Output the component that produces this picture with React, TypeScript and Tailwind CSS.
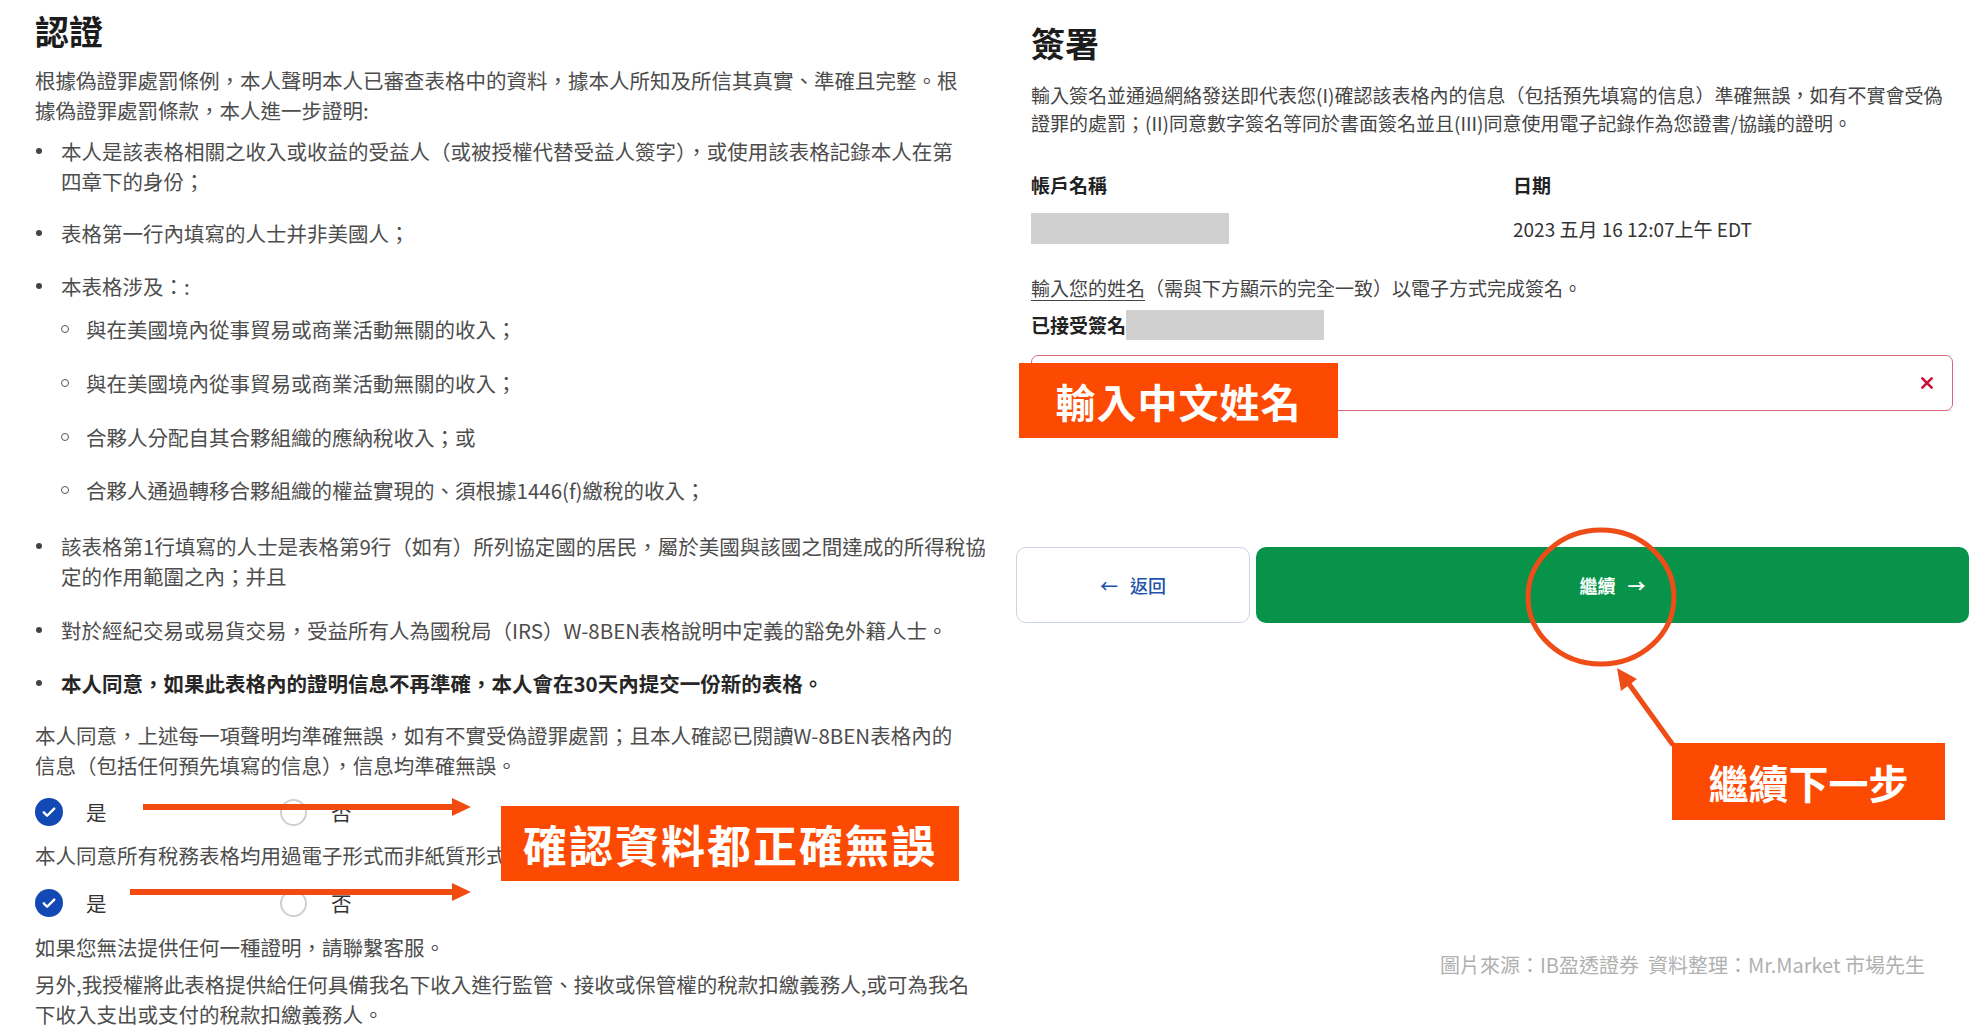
import { ReactNode } from 'react';

const CJK = "font-['Noto_Sans_CJK_TC','Noto_Sans',sans-serif]";

function Bullet({ children, className = '' }: { children: ReactNode; className?: string }) {
  return (
    <li className={`flex ${className}`}>
      <span className="flex h-[30px] w-[26px] shrink-0 items-center">
        <span className="ml-[1px] h-[6px] w-[6px] rounded-full bg-[#444]" />
      </span>
      <span className="flex-1">{children}</span>
    </li>
  );
}

function SubBullet({ children, className = '' }: { children: ReactNode; className?: string }) {
  return (
    <li className={`flex ${className}`}>
      <span className="flex h-[30px] w-[25px] shrink-0 items-center">
        <span className="h-[8px] w-[8px] rounded-full border-[1.5px] border-[#555]" />
      </span>
      <span className="flex-1">{children}</span>
    </li>
  );
}

function RadioRow() {
  return (
    <div className="flex h-[30px] items-center">
      <div className="flex w-[245px] items-center">
        <span className="flex h-[28px] w-[28px] items-center justify-center rounded-full bg-[#1249b5]">
          <svg width="18" height="18" viewBox="0 0 24 24" fill="none" stroke="white" strokeWidth="3.2" strokeLinecap="round" strokeLinejoin="round">
            <path d="M5 12.5l4.5 4.5L19 7.5" />
          </svg>
        </span>
        <span className="ml-[23px] text-[#333]">是</span>
      </div>
      <span className="h-[27px] w-[27px] rounded-full border-2 border-[#cfcfcf]" />
      <span className="ml-[24px] text-[#333]">否</span>
    </div>
  );
}

export default function App() {
  return (
    <div className={`relative flex h-[1028px] w-[1986px] overflow-hidden bg-white ${CJK}`}>
      {/* left: 認證 */}
      <div className="w-[1016px] shrink-0 pl-[35px] pr-[44px] pt-[9px] text-[20.5px] leading-[30px] text-[#4d4d4d]">
        <h1 className="text-[34px] font-bold leading-[44px] text-[#1c1c1c]">認證</h1>
        <p className="mt-[12px]">
          根據偽證罪處罰條例，本人聲明本人已審查表格中的資料，據本人所知及所信其真實、準確且完整。根據偽證罪處罰條款，本人進一步證明:
        </p>
        <ul className="mt-[11px]">
          <Bullet>本人是該表格相關之收入或收益的受益人（或被授權代替受益人簽字），或使用該表格記錄本人在第四章下的身份；</Bullet>
          <Bullet className="mt-[22px]">表格第一行內填寫的人士并非美國人；</Bullet>
          <Bullet className="mt-[23px]">
            本表格涉及：:
            <ul className="-ml-[26px] mt-[13px] pl-[26px]">
              <SubBullet>與在美國境內從事貿易或商業活動無關的收入；</SubBullet>
              <SubBullet className="mt-[24px]">與在美國境內從事貿易或商業活動無關的收入；</SubBullet>
              <SubBullet className="mt-[24px]">合夥人分配自其合夥組織的應納稅收入；或</SubBullet>
              <SubBullet className="mt-[23px]">合夥人通過轉移合夥組織的權益實現的、須根據1446(f)繳稅的收入；</SubBullet>
            </ul>
          </Bullet>
          <Bullet className="mr-[-18px] mt-[26px]">該表格第1行填寫的人士是表格第9行（如有）所列協定國的居民，屬於美國與該國之間達成的所得稅協定的作用範圍之內；并且</Bullet>
          <Bullet className="mt-[24px]">對於經紀交易或易貨交易，受益所有人為國稅局（IRS）W-8BEN表格說明中定義的豁免外籍人士。</Bullet>
          <Bullet className="mt-[23px]">
            <span className="font-semibold text-[#262626]">本人同意，如果此表格內的證明信息不再準確，本人會在30天內提交一份新的表格。</span>
          </Bullet>
        </ul>
        <p className="mt-[22px]">
          本人同意，上述每一項聲明均準確無誤，如有不實受偽證罪處罰；且本人確認已閱讀W-8BEN表格內的信息（包括任何預先填寫的信息），信息均準確無誤。
        </p>
        <div className="mt-[17px]">
          <RadioRow />
        </div>
        <p className="mt-[13px]">本人同意所有稅務表格均用過電子形式而非紙質形式提交。</p>
        <div className="mt-[18px]">
          <RadioRow />
        </div>
        <p className="mt-[14px]">如果您無法提供任何一種證明，請聯繫客服。</p>
        <p className="mt-[7px]">
          另外,我授權將此表格提供給任何具備我名下收入進行監管、接收或保管權的稅款扣繳義務人,或可為我名下收入支出或支付的稅款扣繳義務人。
        </p>
      </div>

      {/* right: 簽署 */}
      <div className="w-[970px] shrink-0 pl-[15px] pt-[21px] text-[19px] leading-[28px] text-[#444]">
        <h1 className="text-[34px] font-bold leading-[44px] text-[#1c1c1c]">簽署</h1>
        <p className="mt-[16px] w-[930px] leading-[28px]">
          輸入簽名並通過網絡發送即代表您(I)確認該表格內的信息（包括預先填寫的信息）準確無誤，如有不實會受偽證罪的處罰；(II)同意數字簽名等同於書面簽名並且(III)同意使用電子記錄作為您證書/協議的證明。
        </p>
        <div className="mt-[34px] grid grid-cols-[482px_1fr]">
          <div className="font-bold text-[#222]">帳戶名稱</div>
          <div className="font-bold text-[#222]">日期</div>
          <div className="mt-[14px] h-[31px] w-[198px] bg-[#d0d0d0]" />
          <div className="mt-[14px] flex h-[31px] items-center text-[#333]">2023 五月 16 12:07上午 EDT</div>
        </div>
        <p className="mt-[30px]">
          <span className="underline underline-offset-4">輸入您的姓名</span>（需與下方顯示的完全一致）以電子方式完成簽名。
        </p>
        <div className="mt-[8px] flex h-[30px] items-center">
          <span className="font-bold text-[#222]">已接受簽名</span>
          <span className="h-[30px] w-[198px] bg-[#d0d0d0]" />
        </div>
        <div className="mt-[15px] flex h-[56px] w-[922px] items-center justify-end rounded-[7px] border-[1.5px] border-[#d9667c] pr-[17px]">
          <svg width="16" height="16" viewBox="0 0 24 24" fill="none" stroke="#c8143a" strokeWidth="4" strokeLinecap="round">
            <path d="M5 5l14 14M19 5L5 19" />
          </svg>
        </div>
        <div className="-ml-[15px] mt-[136px] flex h-[76px] w-[953px] gap-[6px]">
          <button className="flex w-[234px] items-center justify-center gap-[12px] rounded-[10px] border-[1.5px] border-[#c9d3e3] bg-white text-[18px] font-medium text-[#2153a8]">
            <span>←</span>
            <span>返回</span>
          </button>
          <button className="flex flex-1 items-center justify-center gap-[12px] rounded-[10px] bg-[#07934a] text-[18px] font-bold text-white">
            <span>繼續</span>
            <span>→</span>
          </button>
        </div>
        <div className="mt-[328px] w-[894px] text-right text-[20px] text-[#b0b0b0]">
          圖片來源：IB盈透證券&nbsp;&nbsp;資料整理：Mr.Market 市場先生
        </div>
      </div>

      {/* annotations */}
      <svg className="pointer-events-none absolute inset-0" width="1986" height="1028">
        <line x1="143" y1="807" x2="454" y2="807" stroke="#f24b12" strokeWidth="6" />
        <polygon points="452,798 471,807 452,816" fill="#f24b12" />
        <line x1="130" y1="892" x2="454" y2="892" stroke="#f24b12" strokeWidth="6" />
        <polygon points="452,883 471,892 452,901" fill="#f24b12" />
        <ellipse cx="1601" cy="597" rx="73" ry="67" fill="none" stroke="#ee4d18" strokeWidth="5" />
        <line x1="1673" y1="745" x2="1629" y2="684" stroke="#ee4d18" strokeWidth="5" />
        <polygon points="1617,668 1637,679 1621,691" fill="#ee4d18" />
      </svg>
      <div className="absolute left-[501px] top-[806px] flex h-[75px] w-[458px] items-center justify-center bg-[#fd4a02] text-[44px] font-bold tracking-[2px] text-white">
        確認資料都正確無誤
      </div>
      <div className="absolute left-[1019px] top-[363px] flex h-[75px] w-[319px] items-center justify-center bg-[#fd4a02] text-[40px] font-bold tracking-[1px] text-white">
        輸入中文姓名
      </div>
      <div className="absolute left-[1672px] top-[743px] flex h-[77px] w-[273px] items-center justify-center bg-[#fd4a02] text-[40px] font-bold text-white">
        繼續下一步
      </div>
    </div>
  );
}
